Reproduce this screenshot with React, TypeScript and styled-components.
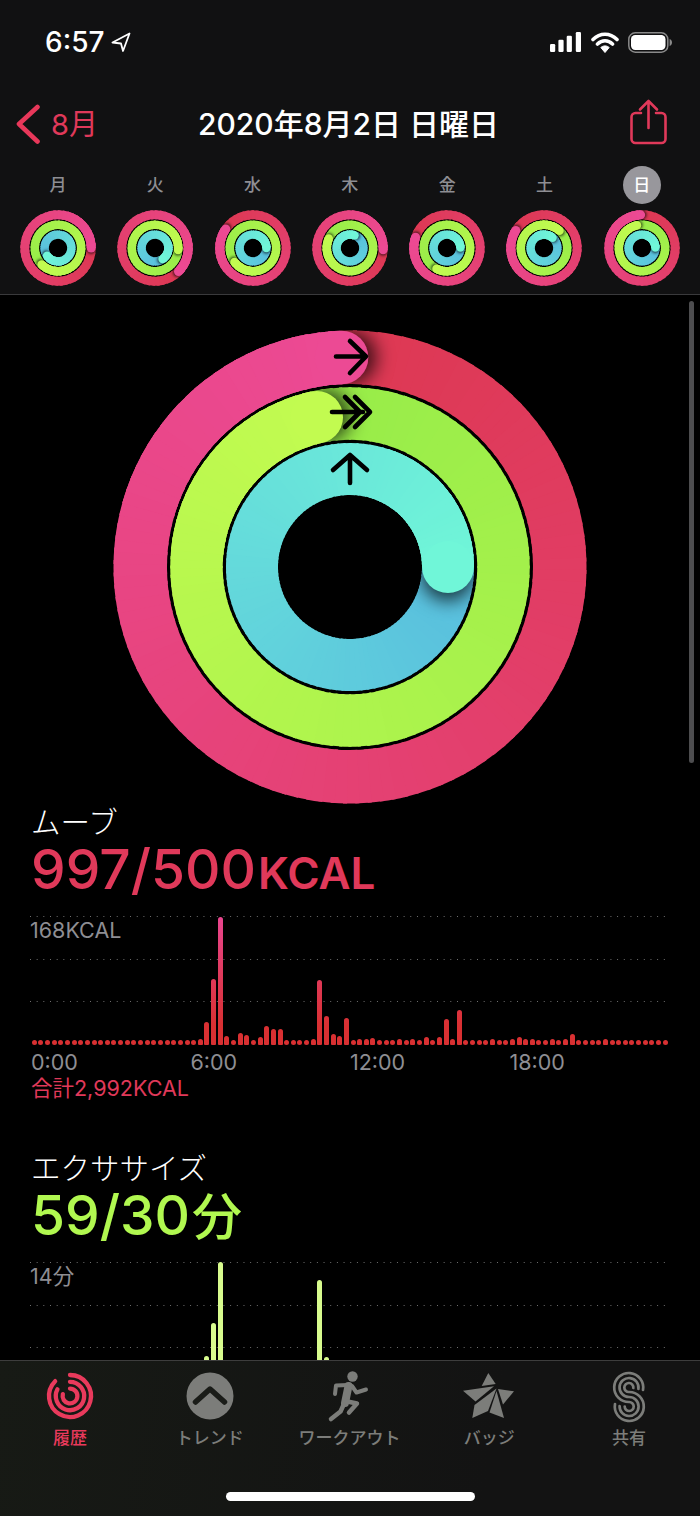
import * as React from "react"
import styled, { createGlobalStyle } from "styled-components"

const FONT = `Inter, "Noto Sans CJK JP", sans-serif`
const RED = "#e0395a"
const GRAY = "#8e8e93"
const TAB_GRAY = "#7c7d7a"

const GlobalStyle = createGlobalStyle`
  html, body {
    margin: 0;
    background: #000;
  }
  body {
    font-family: ${FONT};
    color: #fff;
  }
`

type Rgb = [number, number, number]
type RingDef = { r: number; w: number; from: Rgb; to: Rgb }

const COLORS: { from: Rgb; to: Rgb }[] = [
  { from: [221, 56, 82], to: [236, 74, 148] },
  { from: [151, 236, 73], to: [194, 251, 80] },
  { from: [88, 189, 222], to: [112, 246, 216] }
]

const LARGE = { box: 237, segments: 120, overlap: 1, rings: [[209.75, 53.5], [153.5, 52.5], [98, 52]] }
const SMALL = { box: 38, segments: 48, overlap: 4, rings: [[33.2, 9], [23.2, 8.5], [13.4, 8.4]] }

const polar = (r: number, deg: number) => {
  const a = ((deg - 90) * Math.PI) / 180
  return [r * Math.cos(a), r * Math.sin(a)]
}

const arc = (r: number, start: number, end: number, cx = 0, cy = 0) => {
  const [x1, y1] = polar(r, start)
  const [x2, y2] = polar(r, end)
  const large = end - start > 180 ? 1 : 0
  return `M${(x1 + cx).toFixed(2)} ${(y1 + cy).toFixed(2)}A${r} ${r} 0 ${large} 1 ${(x2 + cx).toFixed(2)} ${(y2 + cy).toFixed(2)}`
}

const mix = (a: Rgb, b: Rgb, t: number) =>
  `rgb(${a.map((v, i) => Math.round(v + (b[i] - v) * t)).join(",")})`

type RingProps = { id: string; def: RingDef; head: number; box: number; segments: number; overlap: number }

const Ring = ({ id, def, head, box, segments, overlap }: RingProps) => {
  const { r, w, from, to } = def
  const step = 360 / segments
  const segs = Array.from({ length: segments }, (_, i) => ({
    i,
    d: arc(r, head + i * step, head + (i + 1) * step + (i === segments - 1 ? 0 : overlap)),
    color: mix(from, to, (i + 0.5) / segments)
  }))
  const [hx, hy] = polar(r, head)
  const [sx, sy] = polar(r, head + ((w * 0.15) / r) * 57.3)
  return (
    <g>
      <defs>
        <mask id={id} maskUnits="userSpaceOnUse" x={-box} y={-box} width={box * 2} height={box * 2}>
          <circle r={r} fill="none" stroke="#fff" strokeWidth={w} />
        </mask>
        <filter id={`${id}b`} x="-50%" y="-50%" width="200%" height="200%">
          <feGaussianBlur stdDeviation={w * 0.17} />
        </filter>
      </defs>
      {segs.map(s => <path key={s.i} d={s.d} fill="none" stroke={s.color} strokeWidth={w} />)}
      <g mask={`url(#${id})`}>
        <circle cx={sx} cy={sy} r={w / 2} fill="#000" fillOpacity={0.72} filter={`url(#${id}b)`} />
      </g>
      {segs.slice(-Math.round(segments / 5)).map(s => (
        <path key={s.i} d={s.d} fill="none" stroke={s.color} strokeWidth={w} />
      ))}
      <circle cx={hx} cy={hy} r={w / 2} fill={mix(from, to, 1)} />
    </g>
  )
}

const Arrows = () => (
  <ArrowGroup>
    <path d="M-14 -210.5H15M0 -226L16 -210.5L0 -194" />
    <path d="M-18 -155H13M-5 -170L10 -155L-5 -140M5 -170L20 -155L5 -140" />
    <path d="M0 -84V-112M-17 -97L0 -112L17 -97" />
  </ArrowGroup>
)

const ActivityRings = ({ heads, large }: { heads: number[]; large?: boolean }) => {
  const uid = React.useId().replace(/[^a-zA-Z0-9]/g, "")
  const { box, rings, segments, overlap } = large ? LARGE : SMALL
  return (
    <RingSvg $size={box * 2} viewBox={`${-box} ${-box} ${box * 2} ${box * 2}`}>
      <circle r={box - 0.3} fill="#000" />
      {rings.map(([r, w], i) => (
        <Ring
          key={i}
          id={`m${uid}${i}`}
          box={box}
          head={heads[i]}
          segments={segments}
          overlap={overlap}
          def={{ r, w, ...COLORS[i] }}
        />
      ))}
      {large && <Arrows />}
    </RingSvg>
  )
}

const DAYS: { label: string; heads: number[]; today?: boolean }[] = [
  { label: "月", heads: [90, 225, 235] },
  { label: "火", heads: [135, 95, 146] },
  { label: "水", heads: [305, 233, 90] },
  { label: "木", heads: [93, 294, 20] },
  { label: "金", heads: [289, 207, 88] },
  { label: "土", heads: [302, 42, 40] },
  { label: "日", heads: [-2.3, -12.5, 88], today: true }
]

const heightsFrom = (base: number, values: Record<number, number>) =>
  Array.from({ length: 96 }, (_, i) => values[i] ?? base)

const MOVE_BARS = heightsFrom(5, {
  25: 6, 26: 23, 27: 66, 28: 128, 29: 9, 31: 12, 32: 10, 34: 8, 35: 19, 36: 16, 37: 16,
  42: 6, 43: 65, 44: 29, 45: 11, 46: 9, 47: 27, 49: 6, 50: 6, 51: 7, 55: 6, 57: 6, 59: 8,
  61: 8, 62: 26, 63: 6, 64: 35, 69: 6, 72: 6, 73: 8, 74: 6, 75: 6, 78: 6, 80: 6, 81: 11, 86: 6
})

const EXERCISE_BARS = heightsFrom(0, { 26: 35, 27: 68, 28: 129, 43: 111, 44: 34 })

const Chart = ({ label, bars, $green }: { label: string; bars: number[]; $green?: boolean }) => (
  <ChartBox>
    <GridLines>
      <GridLine />
      <GridLine />
      <GridLine />
    </GridLines>
    <ChartLabel>{label}</ChartLabel>
    <Bars>
      {bars.map((h, i) => (
        <Bar key={i} $green={$green} $dot={h <= 5} style={{ height: h }} />
      ))}
    </Bars>
  </ChartBox>
)

const TABS = [
  { label: "履歴", active: true, icon: (
    <g fill="none" stroke="currentColor" strokeWidth="4.3" strokeLinecap="round">
      <path d={arc(21, 0, 315, 30, 28)} />
      <path d={arc(14.2, 0, 298, 30, 28)} />
      <path d={arc(7.4, 0, 285, 30, 28)} />
    </g>
  ) },
  { label: "トレンド", icon: (
    <g>
      <circle cx="30" cy="28" r="23.5" fill="currentColor" />
      <path d="M15.5 34L30 21L44.5 34" fill="none" stroke="#1a1c18" strokeWidth="5.5" strokeLinecap="round" strokeLinejoin="round" />
    </g>
  ) },
  { label: "ワークアウト", icon: (
    <g fill="none" stroke="currentColor" strokeLinecap="round" strokeLinejoin="round">
      <circle cx="33.5" cy="8.5" r="5.2" fill="currentColor" stroke="none" />
      <path d="M29 17L17 17.5L16 26" strokeWidth="4" />
      <path d="M33 18L37.5 24.5L47 21.5" strokeWidth="4" />
      <path d="M29.5 18L26 35" strokeWidth="8" />
      <path d="M26 33L38 35.5L30 44.5" strokeWidth="4.5" />
      <path d="M24.5 37L21.5 43.5L12 51" strokeWidth="4.5" />
    </g>
  ) },
  { label: "バッジ", icon: (
    <g fill="currentColor">
      <path d="M29.3 5L36.7 16L22.7 18Z" />
      <path d="M4 22.7L35 18.3L16.5 33.5Z" />
      <path d="M15.5 37L37.5 20.5L29 43L13.3 50Z" />
      <path d="M37.5 23L45 50L30.5 44.5Z" />
      <path d="M39 21L55 23.3L44 36.5Z" />
    </g>
  ) },
  { label: "共有", icon: (
    <g fill="none" stroke="currentColor" strokeWidth="2.7" strokeLinecap="round">
      <path d="M44 22A14.5 14.5 0 1 0 30 34A4.5 4.5 0 1 1 25.7 38.5" />
      <path d="M39.4 21A9.5 9.5 0 1 0 30 29A9.5 9.5 0 1 1 20.6 38" />
      <path d="M34.3 20A4.5 4.5 0 1 0 30 24A14.5 14.5 0 1 1 16 36" />
    </g>
  ) }
]

export default function App() {
  return (
    <Screen>
      <GlobalStyle />
      <Header>
        <StatusBar>
          <Clock>
            6:57
            <StatusIcon width="20" height="20" viewBox="0 0 20 20">
              <path d="M18.5 1.5L1.5 10.5L10 11.5L12 19Z" fill="none" stroke="#fff" strokeWidth="1.8" strokeLinejoin="round" />
            </StatusIcon>
          </Clock>
          <StatusRight>
            <StatusIcon width="32" height="20" viewBox="0 0 32 20">
              <rect x="0" y="12" width="5.2" height="8" rx="1.2" fill="#fff" />
              <rect x="8.4" y="7.7" width="5.2" height="12.3" rx="1.2" fill="#fff" />
              <rect x="16.7" y="3.7" width="5.2" height="16.3" rx="1.2" fill="#fff" />
              <rect x="25.8" y="0" width="5.2" height="20" rx="1.2" fill="#fff" />
            </StatusIcon>
            <StatusIcon width="28" height="21" viewBox="0 0 28 21">
              <path d="M2 7.5C9 0.5 19 0.5 26 7.5M6.5 12C11 7.7 17 7.7 21.5 12" fill="none" stroke="#fff" strokeWidth="3.6" strokeLinecap="round" />
              <path d="M9.8 15.5C12.2 13.4 15.8 13.4 18.2 15.5L14 20.5Z" fill="#fff" stroke="#fff" strokeLinejoin="round" />
            </StatusIcon>
            <StatusIcon width="44" height="21" viewBox="0 0 44 21">
              <rect x="0.8" y="0.8" width="39" height="19.4" rx="6.5" fill="none" stroke="#8a8a8a" strokeWidth="1.5" />
              <rect x="3" y="3" width="34.5" height="15" rx="4.2" fill="#fff" />
              <path d="M41.6 7V14C43 13.5 44 12.2 44 10.5C44 8.8 43 7.5 41.6 7Z" fill="#8a8a8a" />
            </StatusIcon>
          </StatusRight>
        </StatusBar>
        <NavBar>
          <BackLink>
            <svg width="24" height="40" viewBox="0 0 24 40">
              <path d="M21.5 3L3 20L21.5 37.5" fill="none" stroke="#e8385a" strokeWidth="4.6" strokeLinecap="round" strokeLinejoin="round" />
            </svg>
            <BackText>8月</BackText>
          </BackLink>
          <NavTitle>2020年8月2日 日曜日</NavTitle>
          <ShareButton width="37" height="46" viewBox="0 0 37 46">
            <g fill="none" stroke={RED} strokeWidth="2.6" strokeLinecap="round" strokeLinejoin="round">
              <path d="M11 14H5.5A4 4 0 0 0 1.5 18V40A4 4 0 0 0 5.5 44H31.5A4 4 0 0 0 35.5 40V18A4 4 0 0 0 31.5 14H26" />
              <path d="M18.5 2V29M10 10.5L18.5 2L27 10.5" />
            </g>
          </ShareButton>
        </NavBar>
        <WeekGrid>
          {DAYS.map(d => (
            <DayCell key={d.label}>
              <DayLabel $today={d.today}><DayText>{d.label}</DayText></DayLabel>
              <ActivityRings heads={d.heads} />
            </DayCell>
          ))}
        </WeekGrid>
      </Header>

      <Content>
        <ScrollThumb />
        <HeroRings>
          <ActivityRings heads={[-2.3, -12.5, 90]} large />
        </HeroRings>
        <Section>
          <MetricTitle>ムーブ</MetricTitle>
          <MetricValue $color={RED}>997/500<Unit>KCAL</Unit></MetricValue>
          <Chart label="168KCAL" bars={MOVE_BARS} />
          <Axis>
            <span>0:00</span>
            <span>6:00</span>
            <span>12:00</span>
            <span>18:00</span>
          </Axis>
          <Total>合計2,992KCAL</Total>
        </Section>
        <Section $gap>
          <MetricTitle>エクササイズ</MetricTitle>
          <MetricValue $color="#b1f850">59/30<MinuteUnit>分</MinuteUnit></MetricValue>
          <Chart label="14分" bars={EXERCISE_BARS} $green />
        </Section>
      </Content>

      <TabBar>
        <Tabs>
          {TABS.map(t => (
            <Tab key={t.label} $active={t.active}>
              <svg width="60" height="56" viewBox="0 0 60 56">{t.icon}</svg>
              <TabLabel>{t.label}</TabLabel>
            </Tab>
          ))}
        </Tabs>
        <HomeIndicator />
      </TabBar>
    </Screen>
  )
}

const Screen = styled.div`
  width: 700px;
  height: 1516px;
  display: flex;
  flex-direction: column;
  overflow: hidden;
  background: #000;
`

const Header = styled.header`
  height: 295px;
  flex: none;
  box-sizing: border-box;
  background: #111112;
  border-bottom: 1px solid #3a3a3c;
`

const StatusBar = styled.div`
  height: 84px;
  display: flex;
  align-items: center;
  justify-content: space-between;
  padding: 0 28px 0 45px;
`

const Clock = styled.div`
  display: flex;
  align-items: center;
  gap: 7px;
  font-size: 28px;
  font-weight: 500;
`

const StatusRight = styled.div`
  display: flex;
  align-items: center;
  gap: 9px;
`

const StatusIcon = styled.svg`
  display: block;
  flex: none;
`

const NavBar = styled.div`
  height: 80px;
  display: grid;
  grid-template-columns: 1fr auto 1fr;
  align-items: center;
  padding: 0 33px 0 30px;
`

const BackLink = styled.div`
  display: flex;
  align-items: center;
  gap: 11px;
  margin-left: -14px;
  font-size: 29px;
  color: ${RED};
  svg {
    display: block;
  }
`

const BackText = styled.span`
  margin-top: -4px;
`

const NavTitle = styled.div`
  margin-top: -4px;
  font-size: 30px;
  font-weight: 500;
  white-space: nowrap;
`

const ShareButton = styled.svg`
  justify-self: end;
  display: block;
  margin-top: -5px;
`

const WeekGrid = styled.div`
  display: grid;
  grid-template-columns: repeat(7, 97.3px);
  padding-left: 9.3px;
`

const DayCell = styled.div`
  display: flex;
  flex-direction: column;
  align-items: center;
  gap: 6px;
  padding-top: 2px;
`

const DayLabel = styled.div<{ $today?: boolean }>`
  width: 38px;
  height: 38px;
  display: flex;
  align-items: center;
  justify-content: center;
  border-radius: 50%;
  font-size: 17px;
  font-weight: 500;
  color: ${p => (p.$today ? "#fff" : GRAY)};
  background: ${p => (p.$today ? "#98979c" : "transparent")};
`

const DayText = styled.span`
  margin-top: -3px;
`

const RingSvg = styled.svg<{ $size: number }>`
  display: block;
  width: ${p => p.$size}px;
  height: ${p => p.$size}px;
`

const ArrowGroup = styled.g`
  fill: none;
  stroke: #000;
  stroke-width: 4.6;
  stroke-linecap: round;
  stroke-linejoin: round;
`

const Content = styled.main`
  flex: 1;
  min-height: 0;
  position: relative;
  overflow: hidden;
`

const ScrollThumb = styled.div`
  position: absolute;
  top: 6px;
  right: 6px;
  width: 5px;
  height: 462px;
  border-radius: 3px;
  background: #4d4d4f;
`

const HeroRings = styled.div`
  display: flex;
  justify-content: center;
  padding-top: 35px;
`

const Section = styled.section<{ $gap?: boolean }>`
  padding: 0 33px 0 30px;
  margin-top: ${p => (p.$gap ? "52px" : "0")};
`

const MetricTitle = styled.div`
  height: 32px;
  margin-top: 2px;
  margin-bottom: -2px;
  padding-left: 1px;
  font-size: 29.5px;
  font-weight: 300;
  line-height: 32px;
`

const MetricValue = styled.div<{ $color: string }>`
  height: 59px;
  margin-top: 3px;
  padding-left: 1px;
  font-size: 55px;
  line-height: 60px;
  font-weight: 500;
  color: ${p => p.$color};
  white-space: nowrap;
`

const Unit = styled.span`
  margin-left: 2px;
  font-size: 44px;
  font-weight: 600;
`

const MinuteUnit = styled.span`
  margin-left: 2px;
  font-size: 50px;
`

const ChartBox = styled.div`
  position: relative;
  margin-top: 18px;
  height: 129px;
  width: 637px;
`

const GridLines = styled.div`
  position: absolute;
  inset: 0;
  display: flex;
  flex-direction: column;
  gap: 41.5px;
`

const GridLine = styled.div`
  height: 1px;
  background-image: linear-gradient(to right, #727272 1.3px, transparent 1.3px);
  background-size: 6.68px 1px;
`

const ChartLabel = styled.div`
  position: absolute;
  top: 2px;
  left: 0;
  font-size: 21.5px;
  line-height: 24px;
  color: ${GRAY};
`

const Bars = styled.div`
  position: relative;
  height: 100%;
  display: flex;
  align-items: flex-end;
  gap: 1.646px;
  padding-left: 1.8px;
`

const Bar = styled.div<{ $green?: boolean; $dot: boolean }>`
  flex: none;
  width: 5px;
  border-radius: ${p => (p.$dot ? "50%" : "2.5px 2.5px 1px 1px")};
  background: ${p =>
    p.$green
      ? "#d8fb8e"
      : "linear-gradient(#ea4690 0, #e03a5c 45%, #d93032 85%) bottom / 100% 128px no-repeat"};
`

const Axis = styled.div`
  display: grid;
  grid-template-columns: repeat(4, 159.5px);
  margin-top: 5px;
  padding-left: 1px;
  font-size: 21.5px;
  line-height: 24px;
  color: ${GRAY};
`

const Total = styled.div`
  margin-top: 2px;
  padding-left: 1px;
  font-size: 21.5px;
  line-height: 24px;
  color: ${RED};
`

const TabBar = styled.nav`
  flex: none;
  height: 156px;
  box-sizing: border-box;
  border-top: 1px solid #3d3d3d;
  padding-top: 7px;
  background: linear-gradient(100deg, #171a15, #131313 70%);
`

const Tabs = styled.div`
  display: grid;
  grid-template-columns: repeat(5, 139.8px);
`

const Tab = styled.div<{ $active?: boolean }>`
  display: flex;
  flex-direction: column;
  align-items: center;
  color: ${p => (p.$active ? "#e93a5c" : TAB_GRAY)};
  svg {
    display: block;
  }
`

const TabLabel = styled.div`
  margin-top: 2px;
  font-size: 17px;
  font-weight: 500;
  line-height: 24px;
  white-space: nowrap;
`

const HomeIndicator = styled.div`
  width: 249px;
  height: 9px;
  margin: 42px auto 0;
  border-radius: 5px;
  background: #fff;
`
